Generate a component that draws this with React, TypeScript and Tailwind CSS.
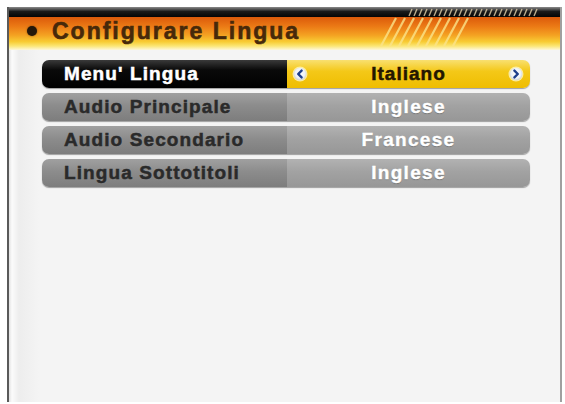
import React from "react";

function Arrow({ dir }: { dir: "left" | "right" }) {
  return (
    <svg width="16" height="16" viewBox="0 0 16 16">
      <defs>
        <radialGradient id={"g" + dir} cx="50%" cy="45%" r="55%">
          <stop offset="0%" stopColor="#ffffff" />
          <stop offset="70%" stopColor="#eef2f8" />
          <stop offset="100%" stopColor="#c9cfd6" />
        </radialGradient>
      </defs>
      <circle cx="8" cy="8" r="7.5" fill="#fff6c0" opacity="0.8" />
      <circle cx="8" cy="8" r="6.3" fill={"url(#g" + dir + ")"} />
      {dir === "left" ? (
        <path d="M9.6 4.6 L6.2 8 L9.6 11.4" fill="none" stroke="#1e3f8c" strokeWidth="2.4" strokeLinecap="round" strokeLinejoin="round" />
      ) : (
        <path d="M6.4 4.6 L9.8 8 L6.4 11.4" fill="none" stroke="#1e3f8c" strokeWidth="2.4" strokeLinecap="round" strokeLinejoin="round" />
      )}
    </svg>
  );
}

export default function App() {
  const rows = [
    { label: "Menu' Lingua", value: "Italiano", active: true },
    { label: "Audio Principale", value: "Inglese", active: false },
    { label: "Audio Secondario", value: "Francese", active: false },
    { label: "Lingua Sottotitoli", value: "Inglese", active: false },
  ];
  const hatch = Array.from({ length: 26 }, (_, i) => i);
  const diag = Array.from({ length: 9 }, (_, i) => i);
  return (
    <div className="w-[565px] h-[404px] bg-white pl-[7px] pt-[7px] font-['Liberation_Sans',Arial,sans-serif]">
      <div className="relative w-[555px] h-[395px] flex flex-col border-l-2 border-r-2 border-l-[#5a5a5a] border-r-[#a0a0a0] bg-[linear-gradient(to_right,#e2e2e2_0px,#fbfbfb_3px,#ededed_10px,#f4f4f4_30px,#f4f4f4_100%)]">
        <div className="relative flex flex-col h-[43px]">
          <div className="h-[10px] bg-[linear-gradient(to_bottom,#8a8a8a_0%,#5a5a5a_20%,#1a1a1a_45%,#050505_100%)]" />
          <div className="h-[33px] flex items-center pb-[5px] bg-[linear-gradient(to_bottom,#dc5a0a_0%,#ec7c16_30%,#f4a222_55%,#f8cc34_75%,#fbe676_88%,#fdf7dc_100%)]">
            <div className="ml-[18px] w-[10px] h-[10px] rounded-full bg-[#24170a] shadow-[0_0_2px_rgba(40,20,0,0.6)]" />
            <div className="ml-[15px] text-[23px] font-bold tracking-[2px] text-[#47290a] leading-none [-webkit-text-stroke:0.6px_#47290a]">
              Configurare Lingua
            </div>
          </div>
          <svg className="absolute left-[399px] top-[1px]" width="130" height="9" viewBox="0 0 130 9">
            {hatch.map((i) => (
              <line key={i} x1={i * 5 + 1} y1="8" x2={i * 5 + 4} y2="1" stroke="#d9c9a4" strokeWidth="1.4" opacity="0.85" />
            ))}
          </svg>
          <svg className="absolute left-[370px] top-[10px]" width="100" height="30" viewBox="0 0 100 30">
            {diag.map((i) => (
              <line key={i} x1={i * 9 + 2} y1="29" x2={i * 9 + 17} y2="1" stroke="#fbe48a" strokeWidth="2.2" opacity="0.8" />
            ))}
          </svg>
        </div>
        <div className="flex flex-col gap-[5px] pt-[10px] pl-[33px]">
          {rows.map((r) => (
            <div
              key={r.label}
              className="flex w-[488px] h-[28px] rounded-[7px] overflow-hidden shadow-[0_1px_1px_rgba(0,0,0,0.35)]"
            >
              <div
                className={
                  r.active
                    ? "w-[245px] flex items-center pl-[22px] text-[19px] font-bold tracking-[1.1px] text-white bg-[linear-gradient(to_bottom,#3a3a3a_0%,#0a0a0a_35%,#000_100%)] [-webkit-text-stroke:0.5px_#ffffff]"
                    : "w-[245px] flex items-center pl-[22px] text-[19px] font-bold tracking-[1.1px] text-[#2a2a2a] bg-[linear-gradient(to_bottom,#a0a0a0_0%,#8c8c8c_45%,#7d7d7d_100%)] [-webkit-text-stroke:0.5px_#2a2a2a]"
                }
              >
                {r.label}
              </div>
              <div
                className={
                  r.active
                    ? "flex-1 relative flex items-center justify-center text-[19px] font-bold tracking-[1px] text-[#241600] bg-[linear-gradient(to_bottom,#f9e070_0%,#f4c818_40%,#efbd00_100%)] [-webkit-text-stroke:0.5px_#241600]"
                    : "flex-1 relative flex items-center justify-center text-[19px] font-bold tracking-[1.3px] text-white bg-[linear-gradient(to_bottom,#b2b2b2_0%,#a2a2a2_45%,#979797_100%)] [text-shadow:0_1px_1px_rgba(0,0,0,0.25)] [-webkit-text-stroke:0.4px_#ffffff]"
                }
              >
                {r.active && (
                  <div className="absolute left-[5px] top-[6px] flex">
                    <Arrow dir="left" />
                  </div>
                )}
                <span>{r.value}</span>
                {r.active && (
                  <div className="absolute right-[6px] top-[6px] flex">
                    <Arrow dir="right" />
                  </div>
                )}
              </div>
            </div>
          ))}
        </div>
      </div>
    </div>
  );
}
